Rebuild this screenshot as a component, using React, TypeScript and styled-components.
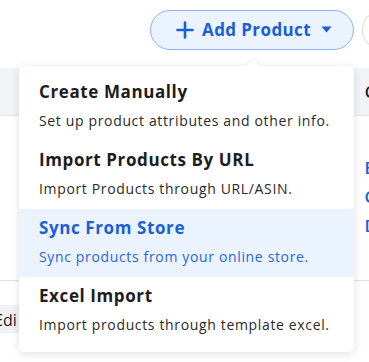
import React from 'react';
import styled, { createGlobalStyle } from 'styled-components';

const BLUE = '#1a5fd6';
const BLUE_BG = '#eaf3fe';
const DARK = '#1d1d1f';
const FONT = `'Open Sans', 'Noto Sans', sans-serif`;

const GlobalStyle = createGlobalStyle`
  html, body { margin: 0; padding: 0; background: #ffffff; }
  body { font-family: ${FONT}; width: 369px; height: 362px; overflow: hidden; }
`;

type MenuItem = {
  title: string;
  description: string;
  active?: boolean;
};

const ITEMS: MenuItem[] = [
  { title: 'Create Manually', description: 'Set up product attributes and other info.' },
  { title: 'Import Products By URL', description: 'Import Products through URL/ASIN.' },
  { title: 'Sync From Store', description: 'Sync products from your online store.', active: true },
  { title: 'Excel Import', description: 'Import products through template excel.' },
];

export default function App() {
  return (
    <>
      <GlobalStyle />
      <Page>
        <Toolbar>
          <AddButton>
            <svg width="18" height="18" viewBox="0 0 18 18">
              <path d="M9 1.5v15M1.5 9h15" stroke={BLUE} strokeWidth="2.6" strokeLinecap="round" />
            </svg>
            <ButtonLabel>Add Product</ButtonLabel>
            <svg width="11" height="7" viewBox="0 0 11 7">
              <path d="M0.5 0.5h10L5.5 6.5z" fill={BLUE} />
            </svg>
          </AddButton>
          <RoundButton />
        </Toolbar>
        <TableHead>
          <HeadCell>C</HeadCell>
        </TableHead>
        <TableBody>
          <LinkColumn>
            <LinkText>E</LinkText>
            <LinkText>C</LinkText>
            <LinkText>D</LinkText>
          </LinkColumn>
        </TableBody>
        <Footer>
          <EditCell>Edi</EditCell>
        </Footer>

        <Dropdown>
          <Caret />
          {ITEMS.map((item) => (
            <Item key={item.title} $active={item.active}>
              <Title $active={item.active}>{item.title}</Title>
              <Description $active={item.active}>{item.description}</Description>
            </Item>
          ))}
        </Dropdown>
      </Page>
    </>
  );
}

const Page = styled.div`
  position: relative;
  width: 369px;
  height: 362px;
  overflow: hidden;
  background: #ffffff;
`;

const Toolbar = styled.div`
  display: flex;
  align-items: center;
  justify-content: flex-end;
  gap: 8px;
  height: 68px;
  margin-right: -33px;
`;

const AddButton = styled.div`
  box-sizing: border-box;
  display: flex;
  align-items: center;
  gap: 8px;
  width: 204px;
  height: 40px;
  margin-top: -9px;
  padding-left: 25px;
  border: 1px solid #8cb4f2;
  border-radius: 20px;
  background: ${BLUE_BG};
  color: ${BLUE};

  svg:last-child {
    margin-left: 2px;
  }
`;

const ButtonLabel = styled.span`
  font-size: 17px;
  font-weight: 700;
  letter-spacing: 0.4px;
`;

const RoundButton = styled.div`
  box-sizing: border-box;
  width: 40px;
  height: 40px;
  margin-top: -9px;
  border: 1px solid #d6d6d6;
  border-radius: 50%;
`;

const TableHead = styled.div`
  display: flex;
  align-items: center;
  justify-content: flex-end;
  height: 47px;
  background: #f3f4f8;
  border-bottom: 1px solid #e6e7ec;
`;

const HeadCell = styled.span`
  margin-right: -6px;
  font-size: 16px;
  font-weight: 600;
  color: ${DARK};
`;

const TableBody = styled.div`
  display: flex;
  justify-content: flex-end;
  height: 164px;
  border-bottom: 1px solid #e3e3e6;
`;

const LinkColumn = styled.div`
  display: flex;
  flex-direction: column;
  gap: 7px;
  padding-top: 41px;
  margin-right: -8px;
`;

const LinkText = styled.span`
  font-size: 17px;
  font-weight: 600;
  line-height: 22px;
  color: ${BLUE};
`;

const Footer = styled.div`
  padding-top: 24px;
`;

const EditCell = styled.div`
  width: 40px;
  height: 28px;
  margin-left: -6px;
  background: #f0f1f5;
  border-radius: 4px;
  font-size: 16px;
  line-height: 30px;
  color: ${DARK};
`;

const Dropdown = styled.div`
  position: absolute;
  top: 66px;
  left: 19px;
  width: 335px;
  padding: 7px 0;
  background: #ffffff;
  border-radius: 5px;
  box-shadow: 0 2px 10px rgba(0, 0, 0, 0.12);
`;

const Caret = styled.div`
  position: absolute;
  top: -5px;
  left: 229px;
  width: 10px;
  height: 10px;
  background: #ffffff;
  transform: rotate(45deg);
  box-shadow: -1px -1px 2px rgba(0, 0, 0, 0.05);
`;

const Item = styled.div<{ $active?: boolean }>`
  position: relative;
  box-sizing: border-box;
  height: 68px;
  padding: 7px 20px 0;
  background: ${(p) => (p.$active ? BLUE_BG : 'transparent')};
`;

const Title = styled.div<{ $active?: boolean }>`
  font-size: 17px;
  font-weight: 700;
  line-height: 24px;
  letter-spacing: 0.6px;
  color: ${(p) => (p.$active ? BLUE : DARK)};
`;

const Description = styled.div<{ $active?: boolean }>`
  margin-top: 7px;
  font-size: 14px;
  line-height: 20px;
  letter-spacing: 0.65px;
  color: ${(p) => (p.$active ? '#2a66d4' : '#2a2a2a')};
`;
